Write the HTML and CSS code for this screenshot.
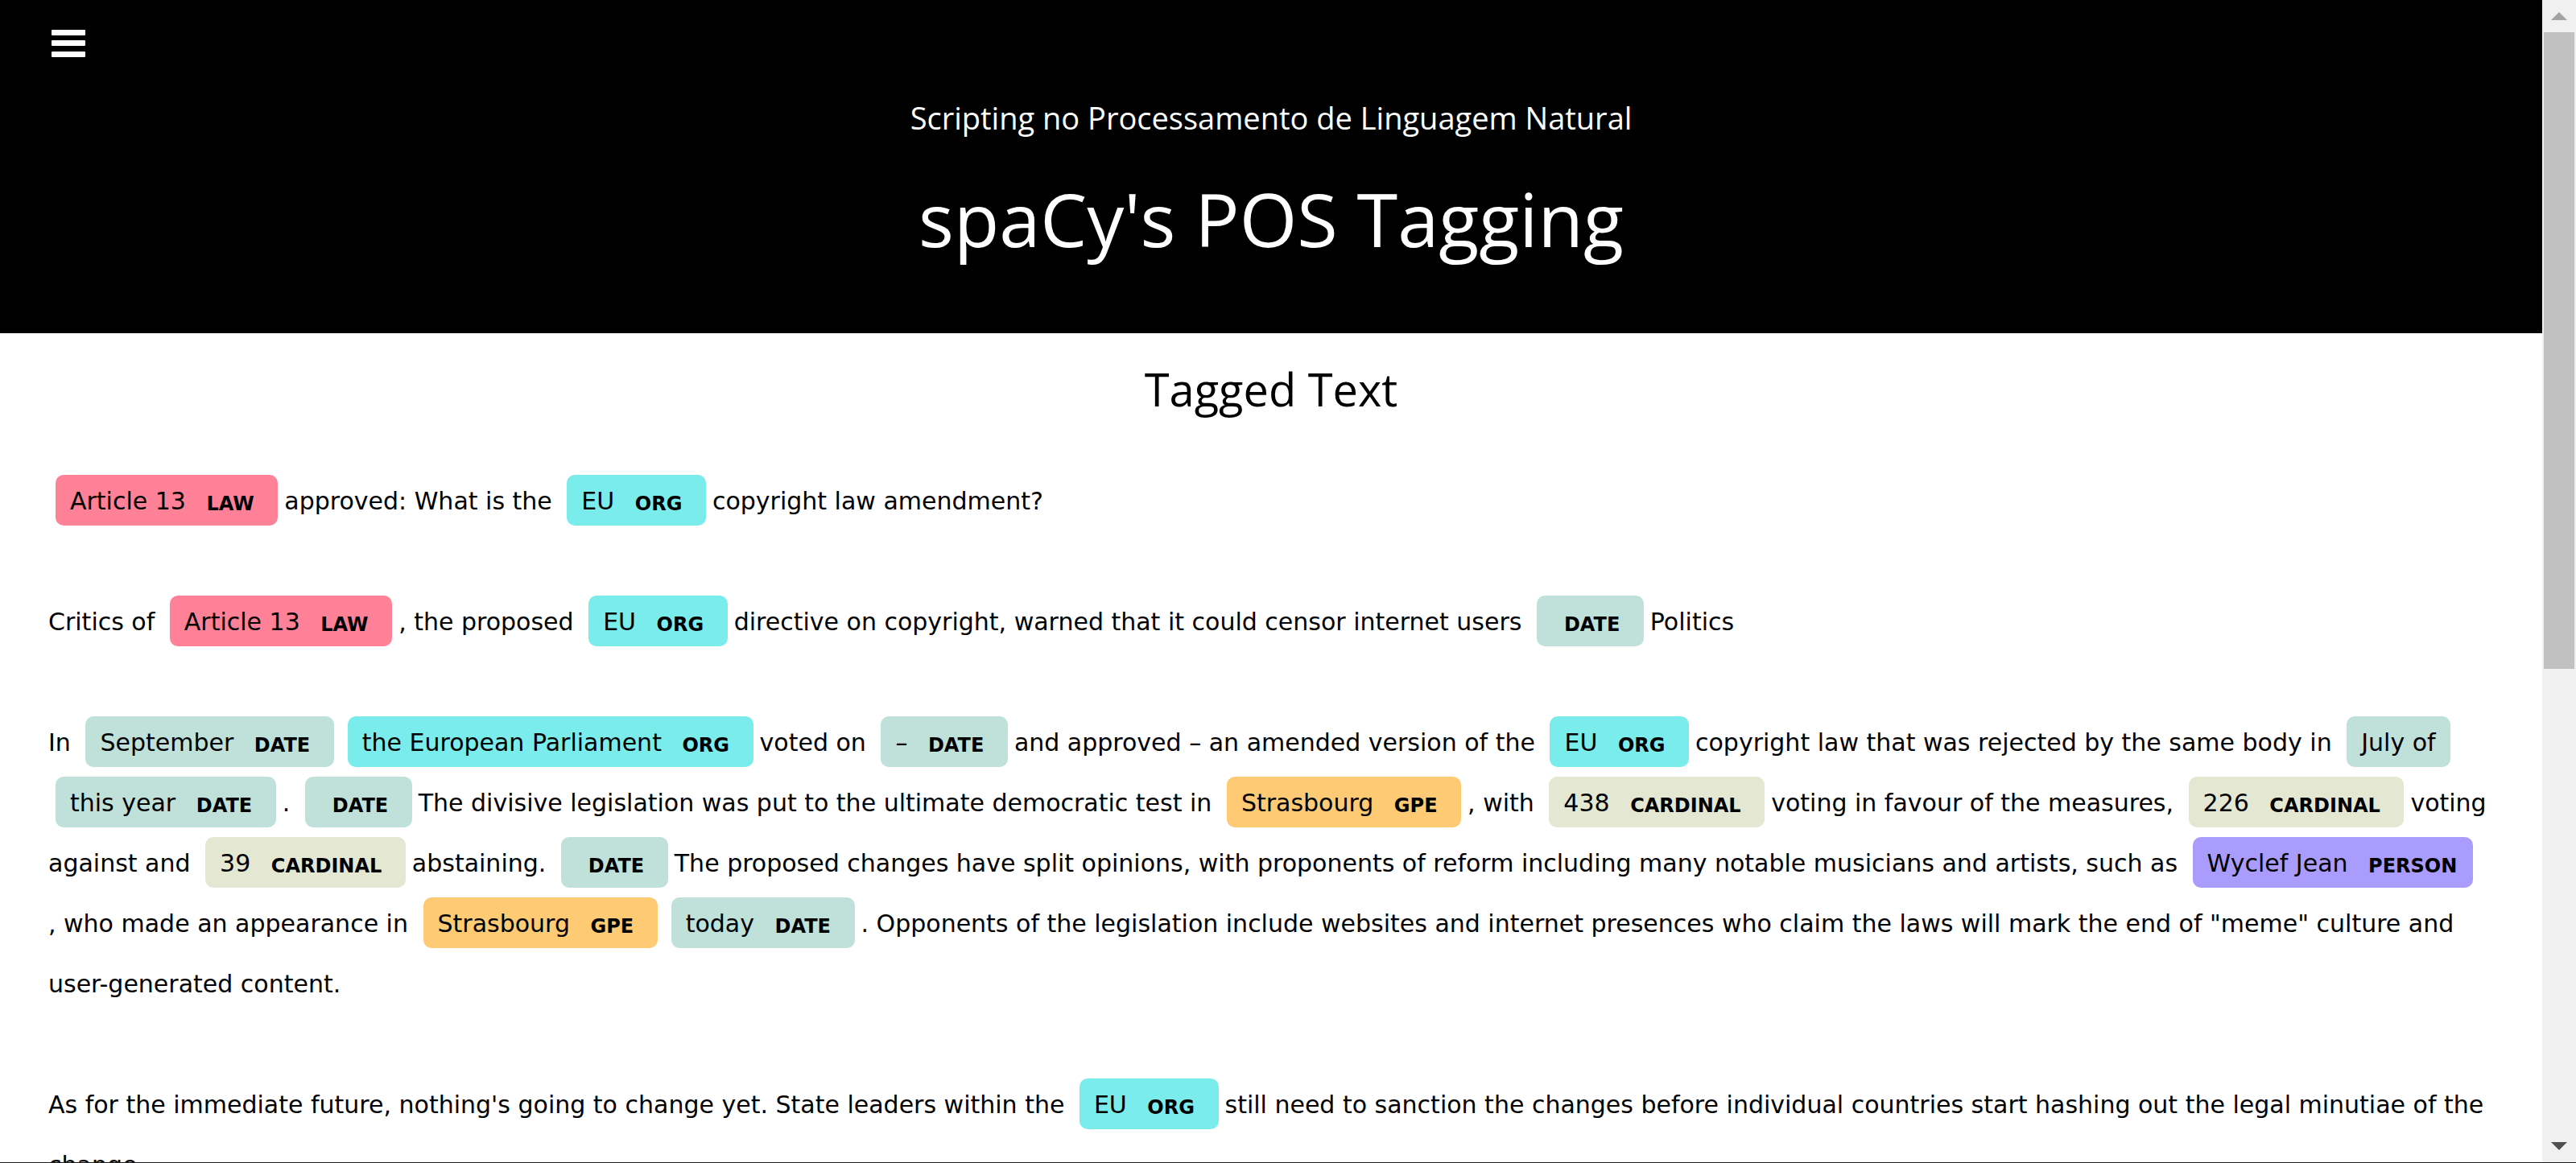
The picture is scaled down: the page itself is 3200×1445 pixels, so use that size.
FILE: index.html
```html
<!DOCTYPE html>
<html lang="pt">
<head>
<meta charset="utf-8">
<title>spaCy's POS Tagging</title>
<link rel="stylesheet" href="styles.css">
</head>
<body>
<div class="page">
  <header class="hero">
    <button class="menu" type="button" aria-label="Menu">
      <svg viewBox="0 0 42 36" aria-hidden="true"><rect y="1" width="42" height="7" rx="1"/><rect y="14" width="42" height="7" rx="1"/><rect y="28" width="42" height="7" rx="1"/></svg>
    </button>
    <p class="course">Scripting no Processamento de Linguagem Natural</p>
    <h1 class="title">spaCy's POS Tagging</h1>
  </header>
  <main class="content">
    <h2 class="section-title">Tagged Text</h2>
    <div class="entities">
      <p><mark class="entity law">Article 13 <span class="label">LAW</span> </mark>approved: What is the <mark class="entity org">EU <span class="label">ORG</span> </mark>copyright law amendment?</p>
      <p>Critics of <mark class="entity law">Article 13 <span class="label">LAW</span> </mark>, the proposed <mark class="entity org">EU <span class="label">ORG</span> </mark>directive on copyright, warned that it could censor internet users <mark class="entity date"> <span class="label">DATE</span> </mark>Politics</p>
      <p>In <mark class="entity date">September <span class="label">DATE</span> </mark> <mark class="entity org">the European Parliament <span class="label">ORG</span> </mark>voted on <mark class="entity date">– <span class="label">DATE</span> </mark>and approved – an amended version of the <mark class="entity org">EU <span class="label">ORG</span> </mark>copyright law that was rejected by the same body in <mark class="entity date">July of</mark><br>
      <mark class="entity date">this year <span class="label">DATE</span> </mark>. <mark class="entity date"> <span class="label">DATE</span> </mark>The divisive legislation was put to the ultimate democratic test in <mark class="entity gpe">Strasbourg <span class="label">GPE</span> </mark>, with <mark class="entity cardinal">438 <span class="label">CARDINAL</span> </mark>voting in favour of the measures, <mark class="entity cardinal">226 <span class="label">CARDINAL</span> </mark>voting<br>
      against and <mark class="entity cardinal">39 <span class="label">CARDINAL</span> </mark>abstaining. <mark class="entity date"> <span class="label">DATE</span> </mark>The proposed changes have split opinions, with proponents of reform including many notable musicians and artists, such as <mark class="entity person">Wyclef Jean <span class="label">PERSON</span></mark><br>
      , who made an appearance in <mark class="entity gpe">Strasbourg <span class="label">GPE</span> </mark> <mark class="entity date">today <span class="label">DATE</span> </mark>. Opponents of the legislation include websites and internet presences who claim the laws will mark the end of "meme" culture and<br>
      user-generated content.</p>
      <p>As for the immediate future, nothing's going to change yet. State leaders within the <mark class="entity org">EU <span class="label">ORG</span> </mark>still need to sanction the changes before individual countries start hashing out the legal minutiae of the<br>
      change.</p>
    </div>
  </main>
</div>
<div class="scrollbar" aria-hidden="true">
  <svg class="arrow up" viewBox="0 0 20 10"><path d="M0 10 10 0 20 10Z"/></svg>
  <div class="track"><div class="thumb"></div></div>
  <svg class="arrow down" viewBox="0 0 20 10"><path d="M0 0H20L10 10Z"/></svg>
</div>
</body>
</html>
```
FILE: styles.css
```css
* { box-sizing: border-box; }

body {
  margin: 0;
  height: 100vh;
  display: grid;
  grid-template-columns: minmax(0, 1fr) 42px;
  overflow: hidden;
  border-bottom: 1px solid #1c1c1c;
  background: #fff;
  color: #000;
  font-family: "DejaVu Sans", Verdana, sans-serif;
  font-size: 30px;
}

.page { min-height: 0; overflow: hidden; }

.hero {
  padding: 36px 64px 76px;
  background: #000;
  color: #fff;
  text-align: center;
  font-family: "Segoe UI", "Open Sans", sans-serif;
}

.menu {
  display: block;
  width: 42px;
  height: 36px;
  padding: 0;
  border: 0;
  background: none;
  cursor: pointer;
}

.menu svg { display: block; fill: #fff; }

.course {
  margin: 44px 0 30px;
  font-size: 38px;
  line-height: 60px;
}

.title {
  margin: 0;
  font-size: 92px;
  font-weight: 400;
  line-height: 132px;
}

.content { padding: 24px 60px 0; }

.section-title {
  margin: 0 0 57px;
  text-align: center;
  font-family: "Segoe UI", "Open Sans", sans-serif;
  font-size: 56px;
  font-weight: 400;
  line-height: 90px;
}

.entities { line-height: 75px; }

.entities p { margin: 0 0 75px; }

.entity {
  margin: 0 8px 0 9px;
  padding: 15px 18px 13px;
  border-radius: 10px;
  color: inherit;
  line-height: 30px;
}

.label {
  margin: 0 2px 0 16px;
  font-size: 24px;
  font-weight: 700;
  vertical-align: -1px;
}

.law { background: #ff8197; }
.org { background: #7aecec; }
.date { background: #bfe1d9; }
.gpe { background: #feca74; }
.cardinal { background: #e4e7d2; }
.person { background: #aa9cfc; }

.scrollbar {
  display: flex;
  flex-direction: column;
  align-items: center;
  padding: 15px 2px;
  background: #f0f0f0;
}

.arrow { width: 20px; height: 10px; }
.up { fill: #a3a3a3; }
.down { fill: #505050; }

.track {
  flex: 1;
  width: 100%;
  margin: 15px 0;
}

.thumb {
  height: 58%;
  background: #c1c1c1;
}
```
